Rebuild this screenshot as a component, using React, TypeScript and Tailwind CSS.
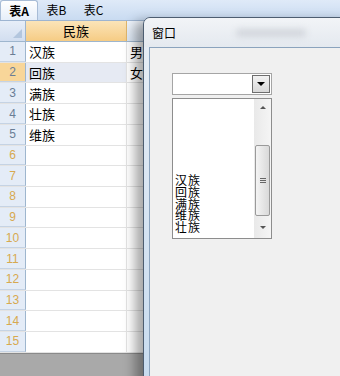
import React from "react";

const cjk = { fontFamily: '"Noto Sans CJK SC", "Noto Sans", sans-serif' };
const num = { fontFamily: '"Liberation Sans", Arial, sans-serif' };

const names = ["汉族", "回族", "满族", "壮族", "维族"];
const sex = ["男", "女"];

function Sheet() {
    const rows = Array.from({ length: 15 }, (_, i) => i + 1);
    return (
        <div className="flex flex-col w-[340px] h-[376px] bg-white">
            {/* Tabs */}
            <div className="flex items-end h-[21px] bg-gradient-to-b from-[#dfeaf8] to-[#c9dbf1] border-b border-[#9db4d1] text-[12px] text-black" style={cjk}>
                <div className="h-[20px] w-[38px] flex items-center justify-center bg-gradient-to-b from-[#ffffff] to-[#e6eef9] border border-b-0 border-[#a8bcd6] rounded-t-[3px] font-bold">表A</div>
                <div className="h-[20px] w-[37px] flex items-center justify-center">表B</div>
                <div className="h-[20px] w-[37px] flex items-center justify-center">表C</div>
            </div>
            {/* Header row */}
            <div className="flex h-[21px] border-b border-[#9eb6ce]">
                <div className="w-[26px] shrink-0 bg-gradient-to-b from-[#e7eef8] to-[#d2def0] border-r border-[#9eb6ce] flex items-end justify-end p-[3px]">
                    <div className="w-0 h-0 border-l-[9px] border-l-transparent border-b-[9px] border-b-[#b3c6de]" />
                </div>
                <div className="w-[101px] shrink-0 bg-gradient-to-b from-[#fbe4b8] to-[#f6cc84] border-r border-[#e0b66b] flex items-center justify-center text-[13px]" style={cjk}>民族</div>
                <div className="flex-1 bg-gradient-to-b from-[#eef3fa] to-[#dbe6f3]" />
            </div>
            {rows.map((r) => (
                <div key={r} className="flex h-[20.73px] border-b border-[#e3e3e3]">
                    <div
                        className={`w-[26px] shrink-0 border-r border-[#9eb6ce] border-b border-b-[#c5d3e4] flex items-center justify-center text-[12px] ${r === 2 ? "bg-[#f8d699]" : "bg-[#e4ecf7]"} ${r <= 5 ? "text-[#6a7d95]" : "text-[#d7a94f]"}`}
                        style={num}
                    >
                        {r}
                    </div>
                    <div className={`w-[101px] shrink-0 border-r border-[#e3e3e3] flex items-center pl-[3px] text-[13px] text-black ${r === 2 ? "bg-[#e6eaf3]" : ""}`} style={cjk}>
                        {names[r - 1] ?? ""}
                    </div>
                    <div className="flex-1 flex items-center pl-[3px] text-[13px] text-black" style={cjk}>
                        {sex[r - 1] ?? ""}
                    </div>
                </div>
            ))}
            <div className="flex-1 bg-[#a9a9a9] border-t border-[#8a8a8a]" />
        </div>
    );
}

function Window() {
    const items = ["汉族", "回族", "满族", "维族", "壮族"];
    return (
        <div className="absolute left-[143px] top-[17px] w-[210px] h-[380px] rounded-tl-[7px] border border-[#4d5d70] bg-gradient-to-b from-[#e8eef5] to-[#c7dbef] shadow-[-8px_4px_12px_rgba(0,0,0,0.35)] flex flex-col">
            {/* Title bar */}
            <div className="h-[29px] flex items-center pl-[8px] text-[12px] text-black rounded-tl-[7px] bg-gradient-to-b from-[#f2f4f7] to-[#e4e9ef]" style={cjk}>
                窗口
                <div className="ml-[60px] w-[70px] h-[8px] rounded-full bg-[#d2d6dc] blur-[3px]" />
            </div>
            {/* Client */}
            <div className="flex-1 ml-[5px] border-l border-t border-[#8ba3bd] bg-[#f0f0f0] flex flex-col pl-[22px] pt-[25px] gap-[3px]">
                {/* Combo */}
                <div className="w-[100px] h-[22px] bg-white border border-[#a5a5a5] flex items-center justify-end pr-[1px]">
                    <div className="w-[18px] h-[18px] border border-[#6e6e6e] bg-gradient-to-b from-[#f2f2f2] to-[#d8d8d8] flex items-center justify-center">
                        <div className="w-0 h-0 border-l-[4px] border-r-[4px] border-t-[4px] border-l-transparent border-r-transparent border-t-black" />
                    </div>
                </div>
                {/* List */}
                <div className="w-[100px] h-[141px] bg-white border border-[#8d8d8d] flex overflow-hidden">
                    <div className="flex-1 pl-[2px] pt-[75px] flex flex-col text-[12px] leading-[11.8px] text-black" style={cjk}>
                        {items.map((t) => (
                            <div key={t} className="h-[11.8px] tracking-[1px]">{t}</div>
                        ))}
                    </div>
                    <div className="w-[17px] flex flex-col bg-gradient-to-r from-[#e9e9e9] to-[#f5f5f5]">
                        <div className="h-[17px] flex items-center justify-center">
                            <div className="w-0 h-0 border-l-[3px] border-r-[3px] border-b-[3px] border-l-transparent border-r-transparent border-b-[#555]" />
                        </div>
                        <div className="h-[29px]" />
                        <div className="h-[71px] mx-[1px] rounded-[2px] border border-[#9a9a9a] bg-gradient-to-r from-[#f4f4f4] to-[#d9d9d9] flex flex-col items-center justify-center gap-[1px]">
                            <div className="w-[6px] h-px bg-[#666]" />
                            <div className="w-[6px] h-px bg-[#666]" />
                            <div className="w-[6px] h-px bg-[#666]" />
                        </div>
                        <div className="flex-1 flex items-center justify-center">
                            <div className="w-0 h-0 border-l-[3px] border-r-[3px] border-t-[3px] border-l-transparent border-r-transparent border-t-[#555]" />
                        </div>
                    </div>
                </div>
            </div>
        </div>
    );
}

export default function App() {
    return (
        <div className="relative w-[340px] h-[376px] overflow-hidden">
            <Sheet />
            <Window />
        </div>
    );
}
